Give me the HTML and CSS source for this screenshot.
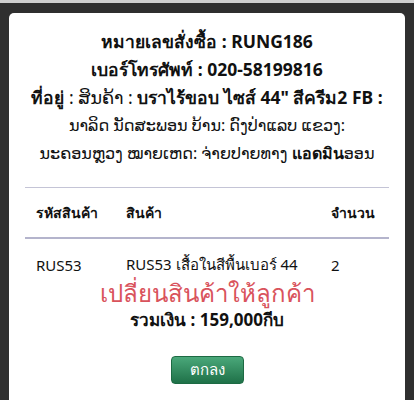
FILE: index.html
```html
<!DOCTYPE html>
<html lang="th">
<head>
<meta charset="utf-8">
<link rel="stylesheet" href="styles.css">
</head>
<body>
<div class="strip"></div>
<div class="overlay">
  <div class="modal">
    <div class="info">
      <div class="line b">หมายเลขสั่งซื้อ : RUNG186</div>
      <div class="line b">เบอร์โทรศัพท์ : 020-58199816</div>
      <div class="line"><b>ที่อยู่</b> : ສິນຄ້າ : <b>บราไร้ขอบ ไซส์ 44" สีครีม2 FB :</b></div>
      <div class="line lao">ນາລິດ ນັດສະພອນ ບ້ານ: ດົງປ່າແລບ ແຂວງ:</div>
      <div class="line lao">ນະຄອນຫຼວງ ໝາຍເຫດ: ຈ່າຍປາຍທາງ <b>แอดมิน</b>ອອນ</div>
    </div>
    <table class="items">
      <thead>
        <tr><th class="c1">รหัสสินค้า</th><th class="c2">สินค้า</th><th class="c3">จำนวน</th></tr>
      </thead>
      <tbody>
        <tr><td class="c1">RUS53</td><td class="c2">RUS53 เสื้อในสีพื้นเบอร์ 44</td><td class="c3">2</td></tr>
      </tbody>
    </table>
    <div class="note">เปลี่ยนสินค้าให้ลูกค้า</div>
    <div class="total">รวมเงิน : 159,000กีบ</div>
    <div class="actions"><button class="ok">ตกลง</button></div>
  </div>
</div>
</body>
</html>
```
FILE: styles.css
```css
html, body {
  margin: 0;
  padding: 0;
  background: #343434;
  font-family: "Noto Sans", "DejaVu Sans", sans-serif;
  color: #111;
  overflow: hidden;
}
.strip {
  height: 3px;
  background: #cfcfcf;
}
.overlay {
  padding: 10px 9px 0 9px;
  background: #2f2f2f;
}
.modal {
  background: #fff;
  border-radius: 5px;
  padding: 14px 16px 20px;
  height: 400px;
  box-sizing: border-box;
}
.info {
  text-align: center;
}
.line {
  font-size: 17.5px;
  line-height: 28px;
  height: 28px;
  white-space: nowrap;
}
.line.b { font-weight: bold; }
.lao { font-size: 16px; }
.items {
  width: 364px;
  margin: 20px 0 0 0;
  border-collapse: collapse;
  font-size: 14px;
}
.items th {
  text-align: left;
  font-weight: bold;
  height: 49px;
  border-top: 1px solid #c4c4d6;
  border-bottom: 2px solid #b4b4cc;
  padding: 0;
}
.items td {
  height: 52px;
  padding: 0;
  font-size: 15px;
}
.c1 { width: 90px; }
.c2 { width: 205px; }
.items th.c1, .items td.c1 { padding-left: 11px; }
.note {
  text-align: center;
  color: #d9535c;
  font-size: 24px;
  line-height: 28px;
  margin-top: -12px;
}
.total {
  text-align: center;
  font-weight: bold;
  font-size: 17px;
  line-height: 24px;
  margin-top: 1px;
}
.actions {
  text-align: center;
  margin-top: 24px;
}
.ok {
  width: 73px;
  height: 28px;
  border: 1px solid #1d6a43;
  border-radius: 4px;
  background: linear-gradient(#4aa87a, #1f7148);
  color: #fff;
  font-family: inherit;
  font-size: 15px;
  padding: 0;
}
```
